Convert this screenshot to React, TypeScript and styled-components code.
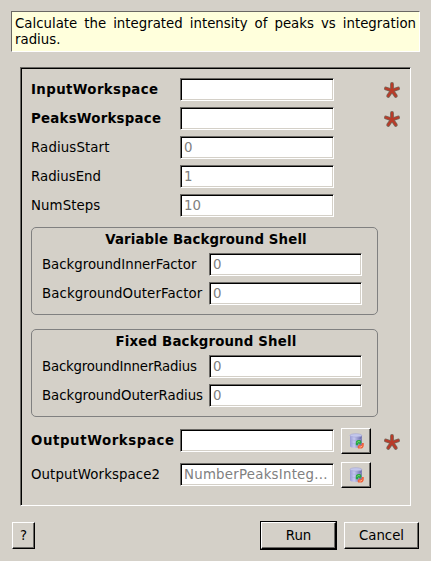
import React from "react";
import styled, { createGlobalStyle, css } from "styled-components";

const GlobalStyle = createGlobalStyle`
  * { box-sizing: border-box; }
  body {
    margin: 0;
    background: #d4d0c8;
    color: #000;
    font: 13.33px/16px "DejaVu Sans", sans-serif;
  }
`;

const Dialog = styled.main`
  width: 431px;
  height: 561px;
  padding: 11px;
  display: flex;
  flex-direction: column;
  overflow: hidden;
`;

const sunken = css`
  border: 1px solid;
  border-color: #6a6864 #fff #fff #6a6864;
`;

const Summary = styled.p`
  ${sunken}
  margin: 0;
  height: 41px;
  padding: 4px 3px 0 3px;
  background: #ffffdc;
`;

const Sentence = styled.span<{ $width: number }>`
  display: block;
  width: ${(p) => p.$width}px;
  white-space: nowrap;
  text-align: justify;
  text-align-last: justify;
`;

const Panel = styled.section`
  ${sunken}
  margin: 15px 9px 0;
  height: 439px;
  padding: 7px 9px 0 9px;
  box-shadow: inset 1px 1px 0 #000;
`;

const Row = styled.div<{ $height?: number }>`
  display: flex;
  align-items: center;
  height: ${(p) => p.$height ?? 29}px;
  padding-left: 1px;
`;

const Label = styled.label<{ $width: number; $bold?: boolean; $spacing?: number }>`
  flex: none;
  width: ${(p) => p.$width}px;
  white-space: nowrap;
  font-weight: ${(p) => (p.$bold ? 700 : 400)};
  letter-spacing: ${(p) => p.$spacing ?? 0}px;
`;

const Field = styled.div<{ $width?: number; $spacing?: number }>`
  ${sunken}
  flex: none;
  width: ${(p) => p.$width ?? 154}px;
  height: 23px;
  padding: 3px 0 0 3px;
  background: #fff;
  color: #808080;
  white-space: nowrap;
  letter-spacing: ${(p) => p.$spacing ?? 0}px;
  box-shadow: inset 1px 1px 0 #000, inset -1px -1px 0 #d4d0c8;
`;

const OutputField = styled(Field)`
  margin-bottom: 1px;
`;

const Group = styled.section`
  width: 347px;
  height: 88px;
  margin: 7px 0 7px 1px;
  padding: 3px 0 0 9px;
  border: 1px solid #808080;
  border-radius: 5px;

  & + & {
    margin-top: 14px;
  }
`;

const GroupTitle = styled.h2<{ $spacing?: number }>`
  margin: 0 0 1px -6px;
  font-size: inherit;
  line-height: 18px;
  text-align: center;
  letter-spacing: ${(p) => p.$spacing ?? 0}px;
`;

const raised = css`
  border: 1px solid;
  border-color: #fff #000 #000 #fff;
  box-shadow: inset -1px -1px 0 #6a6864;
`;

const Button = styled.button<{ $width: number; $height?: number }>`
  ${raised}
  flex: none;
  display: flex;
  align-items: center;
  justify-content: center;
  width: ${(p) => p.$width}px;
  height: ${(p) => p.$height ?? 27}px;
  padding: 0;
  background: #d4d0c8;
  color: #000;
  font: inherit;
`;

const ReplaceButton = styled(Button)`
  margin-left: 7px;
`;

const DefaultFrame = styled.div`
  display: flex;
  margin: 0 7px 0 auto;
  border: 1px solid #000;
`;

const Footer = styled.footer`
  display: flex;
  align-items: center;
  height: 29px;
  margin: 15px 1px 0;
`;

const Star = styled.svg`
  flex: none;
  width: 18px;
  height: 18px;
  margin: 1px 0 0 auto;
`;

const Required = () => (
  <Star viewBox="0 0 18 18" aria-label="Required">
    {[["#79675a", 3.8], ["#b93b29", 2.3]].map(([color, width]) => (
      <path
        key={color}
        d="M9 9.5V3M9 9.5L2.9 7.5M9 9.5L15.1 7.5M9 9.5L5.2 14.9M9 9.5L12.8 14.9"
        fill="none"
        stroke={color}
        strokeWidth={width}
        strokeLinecap="round"
      />
    ))}
  </Star>
);

const DatabaseIcon = () => (
  <svg width="16" height="16" viewBox="0 0 16 16" aria-hidden="true">
    <defs>
      <linearGradient id="drum">
        <stop offset="0" stopColor="#9a9bd6" />
        <stop offset=".35" stopColor="#c6c9f0" />
        <stop offset="1" stopColor="#6264a8" />
      </linearGradient>
    </defs>
    <path d="M2 2.4v10.5c0 2.5 11.8 2.5 11.8 0V2.4z" fill="url(#drum)" />
    <path d="M2 5.8c1 2 10 2 11.6 0M2 9.2c1 2 10 2 11.6 0" fill="none" stroke="#a5a8d8" strokeWidth=".5" />
    <ellipse cx="7.9" cy="2.4" rx="5.9" ry="1.7" fill="#c3c7ec" stroke="#a4a6d4" strokeWidth=".6" />
    <path d="M7.8 12.2V10c0-2 1.2-2.9 2.8-2.9h1.6l1.5 2.2-1.6 2.1-1.4-1.2-.7 1v1z" fill="#25a546" />
    <path d="M9.2 9.6c.4-1 1.6-1.3 2.6-.8" stroke="#8ce66b" fill="none" />
    <path d="M15.8 10v2.2c0 2-1.4 3.4-3.2 3.4H10l-.4-2 2-2 1 1.2 1.2-1.4V10z" fill="#f0613a" />
    <path d="M11.4 14h1.6l1.2-1.2" stroke="#ffad87" fill="none" />
  </svg>
);

type Property = { name: string; value?: string; required?: boolean; spacing?: number; valueSpacing?: number };

const inputs: Property[] = [
  { name: "InputWorkspace", required: true, spacing: 0.38 },
  { name: "PeaksWorkspace", required: true, spacing: 0.24 },
  { name: "RadiusStart", value: "0", spacing: 0.12 },
  { name: "RadiusEnd", value: "1" },
  { name: "NumSteps", value: "10", spacing: 0.08 },
];

const groups: { title: string; spacing?: number; items: Property[] }[] = [
  {
    title: "Variable Background Shell",
    spacing: 0.14,
    items: [
      { name: "BackgroundInnerFactor", value: "0", spacing: -0.02 },
      { name: "BackgroundOuterFactor", value: "0", spacing: 0.11 },
    ],
  },
  {
    title: "Fixed Background Shell",
    spacing: 0.17,
    items: [
      { name: "BackgroundInnerRadius", value: "0", spacing: -0.19 },
      { name: "BackgroundOuterRadius", value: "0", spacing: -0.05 },
    ],
  },
];

const outputs: Property[] = [
  { name: "OutputWorkspace", required: true, spacing: 0.59 },
  { name: "OutputWorkspace2", value: "NumberPeaksInteg...", spacing: 0.09, valueSpacing: 0.24 },
];

export default function App() {
  return (
    <>
      <GlobalStyle />
      <Dialog>
        <Summary>
          <Sentence $width={401}>Calculate the integrated intensity of peaks vs integration</Sentence>
          radius.
        </Summary>
        <Panel>
          <div>
            {inputs.map((p) => (
              <Row key={p.name}>
                <Label $width={149} $bold={p.required} $spacing={p.spacing}>{p.name}</Label>
                <Field>{p.value}</Field>
                {p.required && <Required />}
              </Row>
            ))}
          </div>
          {groups.map((g) => (
            <Group key={g.title}>
              <GroupTitle $spacing={g.spacing}>{g.title}</GroupTitle>
              {g.items.map((p) => (
                <Row key={p.name}>
                  <Label $width={167} $spacing={p.spacing}>{p.name}</Label>
                  <Field $width={153}>{p.value}</Field>
                </Row>
              ))}
            </Group>
          ))}
          {outputs.map((p) => (
            <Row key={p.name} $height={34}>
              <Label $width={149} $bold={p.required} $spacing={p.spacing}>{p.name}</Label>
              <OutputField $spacing={p.valueSpacing}>{p.value}</OutputField>
              <ReplaceButton $width={30} $height={26} aria-label="Replace input workspace">
                <DatabaseIcon />
              </ReplaceButton>
              {p.required && <Required />}
            </Row>
          ))}
        </Panel>
        <Footer>
          <Button $width={23}>?</Button>
          <DefaultFrame>
            <Button $width={75}>Run</Button>
          </DefaultFrame>
          <Button $width={75}>Cancel</Button>
        </Footer>
      </Dialog>
    </>
  );
}
